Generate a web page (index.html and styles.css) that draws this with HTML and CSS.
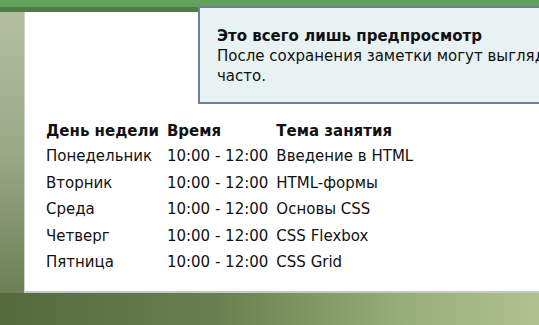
FILE: index.html
```html
<!DOCTYPE html>
<html lang="ru">
<head>
<meta charset="utf-8">
<link rel="stylesheet" href="styles.css">
</head>
<body>
<div class="topbar"></div>
<div class="stage">
  <div class="panel">
    <table class="schedule">
      <thead>
        <tr><th>День недели</th><th>Время</th><th>Тема занятия</th></tr>
      </thead>
      <tbody>
        <tr><td>Понедельник</td><td>10:00 - 12:00</td><td>Введение в HTML</td></tr>
        <tr><td>Вторник</td><td>10:00 - 12:00</td><td>HTML-формы</td></tr>
        <tr><td>Среда</td><td>10:00 - 12:00</td><td>Основы CSS</td></tr>
        <tr><td>Четверг</td><td>10:00 - 12:00</td><td>CSS Flexbox</td></tr>
        <tr><td>Пятница</td><td>10:00 - 12:00</td><td>CSS Grid</td></tr>
      </tbody>
    </table>
  </div>
</div>
<div class="notice">
  <div class="notice-title">Это всего лишь предпросмотр</div>
  <div class="notice-text">После сохранения заметки могут выглядеть иначе. Такое бывает не часто.</div>
</div>
</body>
</html>
```

FILE: styles.css
```css
html, body {
  margin: 0;
  padding: 0;
  width: 539px;
  height: 325px;
  overflow: hidden;
}
body {
  position: relative;
  font-family: "DejaVu Sans", Verdana, sans-serif;
  font-size: 15px;
  color: #111;
  background: linear-gradient(90deg, #55693f 0%, #68804f 40%, #98ae78 75%, #b0c28f 100%);
}
.topbar {
  height: 7px;
  background: #62a25c;
  border-bottom: 5px solid #4f7b46;
}
.stage {
  padding-left: 24px;
  background: linear-gradient(180deg, #b6bea2 0%, #9aa986 50%, #6c7f56 100%);
}
.panel {
  background: #fff;
  height: 281px;
  border-left: 1px solid #c9cfc9;
  border-bottom: 2px solid #c4c8cc;
  padding: 106px 0 0 21px;
  box-sizing: border-box;
}
.schedule {
  border-collapse: collapse;
}
.schedule th, .schedule td {
  text-align: left;
  padding: 0 8px 0 0;
  height: 26.5px;
  white-space: nowrap;
}
.schedule th {
  font-weight: bold;
  height: 25px;
}
.notice {
  position: absolute;
  left: 198px;
  top: 6px;
  width: 341px;
  height: 98px;
  box-sizing: border-box;
  background: #e8f2f3;
  border: 2px solid #6f8197;
  border-right: 0;
  padding: 18px 0 0 17px;
  line-height: 20px;
  overflow: hidden;
}
.notice-title {
  font-weight: bold;
  white-space: nowrap;
}
.notice-text {
  width: 570px;
}
```
